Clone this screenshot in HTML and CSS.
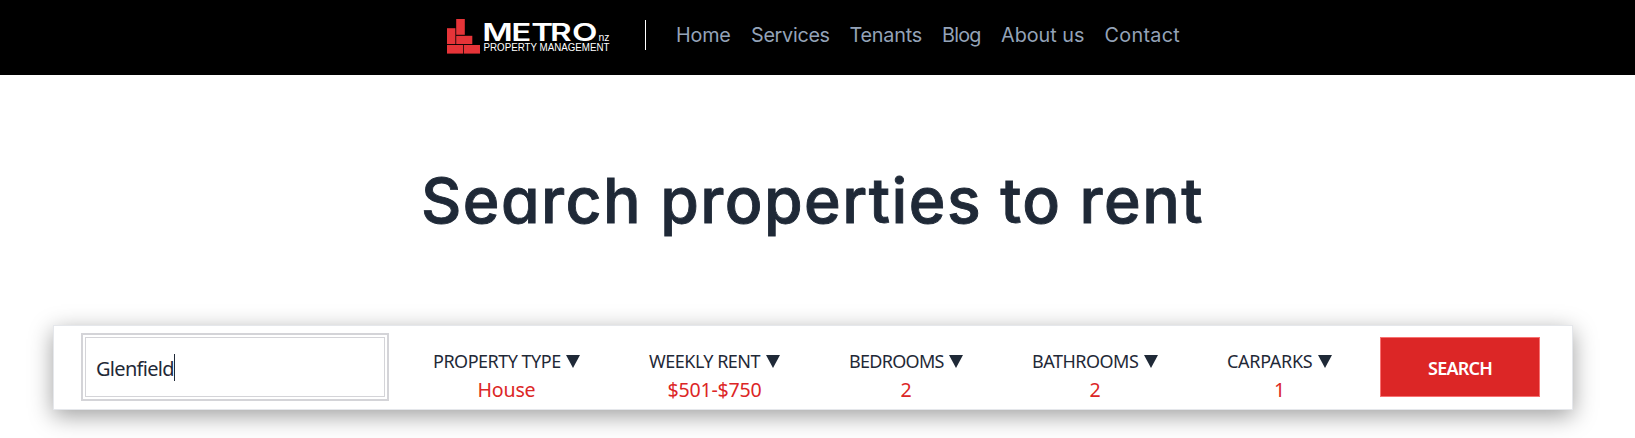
FILE: index.html
```html
<!DOCTYPE html>
<html lang="en">
<head>
<meta charset="utf-8">
<title>Search properties to rent</title>
<link rel="stylesheet" href="styles.css">
</head>
<body>
<header class="site-header">
  <svg class="logo" width="166" height="40" viewBox="0 0 166 40" role="img" aria-label="Metro NZ Property Management">
    <g fill="#e63438">
      <rect x="9.2" y="0" width="8.6" height="15.8"/>
      <rect x="0" y="9.2" width="8.4" height="15.9"/>
      <rect x="9.2" y="16.8" width="16.1" height="8.3"/>
      <rect x="0" y="26" width="16.1" height="8.6"/>
      <rect x="16.8" y="26" width="16.2" height="8.6"/>
    </g>
    <text class="logo-name" transform="scale(1.38 1)" x="25.6 46.6 61 74.6 90.6" y="22">METRO</text>
    <text class="logo-nz" x="151.5" y="22" textLength="11" lengthAdjust="spacingAndGlyphs">nz</text>
    <text class="logo-tag" x="36.5" y="31.5" textLength="126" lengthAdjust="spacingAndGlyphs">PROPERTY MANAGEMENT</text>
  </svg>
  <div class="divider"></div>
  <nav class="nav">
    <a class="nav-home">Home</a>
    <a class="nav-services">Services</a>
    <a class="nav-tenants">Tenants</a>
    <a class="nav-blog">Blog</a>
    <a class="nav-about">About us</a>
    <a class="nav-contact">Contact</a>
  </nav>
</header>
<main>
  <h1 class="title">Search properties to rent</h1>
  <form class="search-bar">
    <div class="location"><span class="location-text">Glenfield</span><i class="caret"></i></div>
    <div class="filters">
      <div class="filter filter-type"><div class="label"><span>PROPERTY TYPE</span><i class="arrow"></i></div><div class="value">House</div></div>
      <div class="filter filter-rent"><div class="label"><span>WEEKLY RENT</span><i class="arrow"></i></div><div class="value">$501-$750</div></div>
      <div class="filter filter-bed"><div class="label"><span>BEDROOMS</span><i class="arrow"></i></div><div class="value">2</div></div>
      <div class="filter filter-bath"><div class="label"><span>BATHROOMS</span><i class="arrow"></i></div><div class="value">2</div></div>
      <div class="filter filter-car"><div class="label"><span>CARPARKS</span><i class="arrow"></i></div><div class="value">1</div></div>
    </div>
    <button class="submit" type="button">SEARCH</button>
  </form>
</main>
</body>
</html>
```

FILE: styles.css
```css
* { box-sizing: border-box; }
body { margin: 0; background: #fff; color: #1f2937; font-family: "Noto Sans", sans-serif; height: 438px; overflow: hidden; }
.site-header { height: 75px; background: #000; display: flex; align-items: flex-start; padding: 19px 0 0 447px; }
.logo { flex: none; display: block; overflow: visible; }
.logo text { fill: #fff; }
.logo-name { font: 600 24px Inter, sans-serif; }
.logo-nz { font: 10.5px "Liberation Sans", sans-serif; }
.logo-tag { font: 10.6px "Liberation Sans", sans-serif; }
.divider { flex: none; width: 1px; height: 30px; background: #fff; margin: 1px 0 0 32px; }
.nav { display: flex; gap: 20px; margin: 1px 0 0 30px; line-height: 30px; font-family: Inter, sans-serif; font-size: 19.8px; color: #94a3b8; }
.nav a { white-space: nowrap; flex: none; }
.nav-home { width: 55px; letter-spacing: -0.2px; }
.nav-services { width: 78.5px; letter-spacing: -0.3px; }
.nav-tenants { width: 72.5px; letter-spacing: -0.2px; }
.nav-blog { width: 39px; letter-spacing: -0.8px; }
.nav-about { width: 83.5px; letter-spacing: 0; }
.nav-contact { width: 76px; letter-spacing: 0.3px; }
.title { margin: 87px 0 0 421px; width: 800px; height: 76px; line-height: 76px; font-family: Inter, sans-serif; font-weight: 500; font-size: 62.5px; font-feature-settings: "cv11"; letter-spacing: 1.45px; -webkit-text-stroke: 0.9px #1f2937; white-space: nowrap; }
.search-bar { margin: 87px 0 0 53px; width: 1520px; height: 85px; border: 1px solid #e5e7eb; background: #fff; display: flex; padding: 11px 32px 0 31px; box-shadow: 0 6px 22px 0 rgba(0,0,0,.38); }
.location { flex: none; width: 300px; height: 60px; border: 1px solid #d4d4d8; box-shadow: 0 0 0 2px #fff, 0 0 0 4px #d4d4d8; display: flex; align-items: center; padding: 4px 0 0 10px; font-size: 20px; }
.location-text { letter-spacing: -0.7px; line-height: 28px; }
.caret { width: 1px; height: 27px; background: #1f2937; margin-top: -4px; }
.filters { flex: none; display: flex; gap: 69px; margin-left: 48px; padding-top: 10px; }
.filter { text-align: center; white-space: nowrap; }
.label { display: flex; justify-content: space-between; font-size: 18px; line-height: 28px; }
.arrow { width: 14px; height: 13px; margin-top: 8px; background: #1f2937; clip-path: polygon(0 0, 100% 0, 50% 100%); }
.value { color: #dc2626; font-size: 19.6px; line-height: 30px; }
.filter-type { width: 147px; letter-spacing: -0.5px; }
.filter-rent { width: 131px; letter-spacing: -0.5px; }
.filter-bed { width: 114px; letter-spacing: -0.7px; }
.filter-bath { width: 126px; letter-spacing: -0.5px; }
.filter-car { width: 105px; letter-spacing: -0.3px; }
.filter .value { letter-spacing: -0.2px; }
.submit { flex: none; width: 160px; height: 60px; margin-left: auto; border: 1px solid #f87171; background: #dc2626; color: #fff; font: 600 18px "Noto Sans", sans-serif; letter-spacing: -0.8px; padding: 2px 0 0 0; }
```
